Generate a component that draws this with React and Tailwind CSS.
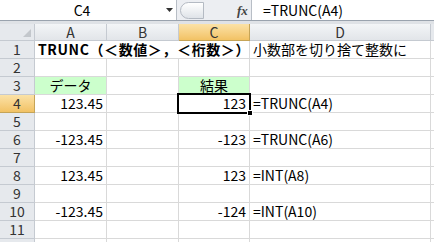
const font = "font-['MS_PGothic','Noto_Sans_CJK_JP',sans-serif]";

const cols = ["A", "B", "C", "D"];

const rows = [
  { n: 1 },
  { n: 2, cells: ["", "", "", ""] },
  { n: 3, cells: [{ t: "データ", c: true, g: true }, "", { t: "結果", c: true, g: true }, ""] },
  { n: 4, cells: [{ t: "123.45", r: true }, "", { t: "123", r: true, active: true }, "=TRUNC(A4)"] },
  { n: 5, cells: ["", "", "", ""] },
  { n: 6, cells: [{ t: "-123.45", r: true }, "", { t: "-123", r: true }, "=TRUNC(A6)"] },
  { n: 7, cells: ["", "", "", ""] },
  { n: 8, cells: [{ t: "123.45", r: true }, "", { t: "123", r: true }, "=INT(A8)"] },
  { n: 9, cells: ["", "", "", ""] },
  { n: 10, cells: [{ t: "-123.45", r: true }, "", { t: "-124", r: true }, "=INT(A10)"] },
  { n: 11, cells: ["", "", "", ""] },
  { n: "", cells: ["", "", "", ""] },
];

function Cell({ cell }) {
  const c = typeof cell === "string" ? { t: cell } : cell;
  return (
    <div
      className={`relative flex h-[18px] items-center border-r border-b border-[#d9d9d9] px-[3px] text-[14px] leading-[17px] text-black whitespace-nowrap ${
        c.r ? "justify-end" : c.c ? "justify-center" : "justify-start"
      } ${c.g ? "bg-[#ccffcc]" : "bg-white"} ${c.active ? "z-10" : ""}`}
    >
      {c.t}
      {c.active && (
        <>
          <div className="absolute -top-[2px] -left-[2px] right-[-2px] bottom-[-2px] border-[2px] border-black" />
          <div className="absolute right-[-4px] bottom-[-4px] h-[6px] w-[6px] border border-white bg-black" />
        </>
      )}
    </div>
  );
}

function RowHead({ n, active }) {
  return (
    <div
      className={`flex h-[18px] items-center justify-center border-r border-b text-[14px] leading-[17px] text-[#333] ${
        active
          ? "border-[#c5a457] bg-gradient-to-b from-[#fbe2a6] to-[#f2c264]"
          : "border-[#c5cad1] bg-[#e6e9ed]"
      }`}
    >
      {n}
    </div>
  );
}

export default function App() {
  return (
    <div className={`h-[242px] w-[434px] overflow-hidden bg-white ${font}`}>
      {/* formula bar */}
      <div className="flex h-[21px] border-b border-[#9aa3ae] bg-[#eceef2]">
        <div className="flex w-[177px] items-center border-r border-[#b8bec6] bg-white">
          <span className="flex-1 text-center text-[14px] leading-none">C4</span>
          <svg width="7" height="4" viewBox="0 0 7 4" className="mr-[3px] ml-[2px]">
            <path d="M0 0h7L3.5 4z" fill="#333" />
          </svg>
        </div>
        <div className="flex w-[74px] items-center">
          <div className="ml-[3px] h-[17px] w-[24px] rounded-l-full border border-[#b4bac3] bg-gradient-to-b from-white to-[#dfe3e8]" />
          <span className="ml-[33px] font-['Liberation_Serif',serif] text-[13px] font-bold italic leading-none text-[#444]">
            fx
          </span>
        </div>
        <div className="flex flex-1 items-center border-l border-[#b8bec6] bg-white pl-[11px] text-[14px] leading-none">
          =TRUNC(A4)
        </div>
      </div>
      <div className="h-[3px] bg-[#dfe2e6]" />

      {/* grid */}
      <div className="grid grid-cols-[35px_72px_72px_71px_181px_1fr]">
        <div className="relative h-[17px] border-r border-b border-[#c5cad1] bg-[#e6e9ed]">
          <svg width="8" height="8" viewBox="0 0 8 8" className="absolute right-[3px] bottom-[3px]">
            <path d="M8 0v8H0z" fill="#c3c7cc" />
          </svg>
        </div>
        {cols.map((c) => (
          <div
            key={c}
            className={`flex h-[17px] items-center justify-center border-r border-b text-[14px] leading-[16px] text-[#333] ${
              c === "C"
                ? "border-[#c5a457] bg-gradient-to-b from-[#fbe2a6] to-[#f2c264]"
                : "border-[#c5cad1] bg-gradient-to-b from-[#f3f5f7] to-[#e2e5e9]"
            }`}
          >
            {c}
          </div>
        ))}
        <div className="h-[17px] border-b border-[#c5cad1] bg-[#e6e9ed]" />

        {rows.map((row, idx) => (
          <div key={idx} className="contents">
            <RowHead n={row.n} active={row.n === 4} />
            {row.n === 1 ? (
              <>
                <div className="col-span-3 flex h-[18px] items-center border-r border-b border-[#d9d9d9] px-[3px] text-[14px] font-bold leading-[17px] tracking-[0.6px] whitespace-nowrap">
                  TRUNC（＜数値＞，＜桁数＞）
                </div>
                <Cell cell="小数部を切り捨て整数に" />
              </>
            ) : (
              row.cells.map((cell, i) => <Cell key={i} cell={cell} />)
            )}
            <div className="h-[18px] border-b border-[#d9d9d9] bg-white" />
          </div>
        ))}
      </div>
    </div>
  );
}
